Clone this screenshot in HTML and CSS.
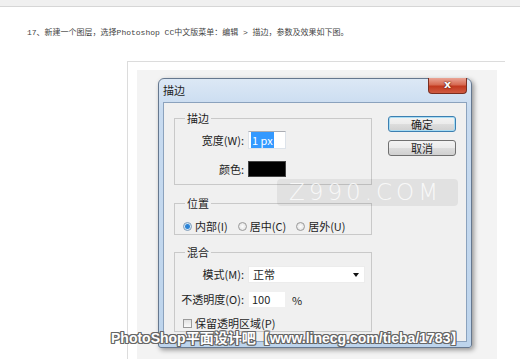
FILE: index.html
```html
<!DOCTYPE html>
<html lang="zh-CN">
<head>
    <meta charset="UTF-8">
    <meta name="viewport" content="width=device-width, initial-scale=1.0">
    <title>描边</title>
    <link rel="stylesheet" href="styles.css">
</head>
<body>
    <div class="topbar"></div>

    <p class="intro">17、新建一个图层，选择Photoshop CC中文版菜单：编辑 &gt; 描边，参数及效果如下图。</p>

    <div class="figure">
        <div class="shot">
            <div class="dialog">
                <div class="titlebar">
                    <span class="title">描边</span>
                    <span class="close">x</span>
                </div>
                <div class="client">
                    <div class="groups">
                        <div class="group group-stroke">
                            <div class="legend">描边</div>
                            <div class="row row-width">
                                <span class="lbl">宽度(W):</span>
                                <span class="field"><span class="sel">1 px</span></span>
                            </div>
                            <div class="row row-color">
                                <span class="lbl">颜色:</span>
                                <span class="swatch"></span>
                            </div>
                        </div>

                        <div class="group group-pos">
                            <div class="legend">位置</div>
                            <div class="radios">
                                <span class="opt"><span class="radio on"></span>内部(I)</span>
                                <span class="opt"><span class="radio"></span>居中(C)</span>
                                <span class="opt"><span class="radio"></span>居外(U)</span>
                            </div>
                        </div>

                        <div class="group group-blend">
                            <div class="legend">混合</div>
                            <div class="row row-mode">
                                <span class="lbl">模式(M):</span>
                                <span class="select">正常<span class="arrow"></span></span>
                            </div>
                            <div class="row row-opacity">
                                <span class="lbl">不透明度(O):</span>
                                <span class="field">100</span>
                                <span class="unit">%</span>
                            </div>
                            <div class="check-row">
                                <span class="checkbox"></span>保留透明区域(P)
                            </div>
                        </div>
                    </div>

                    <div class="buttons">
                        <span class="btn btn-default">确定</span>
                        <span class="btn">取消</span>
                    </div>
                </div>
            </div>

            <div class="mark">Z990.COM</div>
            <div class="credit">PhotoShop平面设计吧【www.linecg.com/tieba/1783】</div>
        </div>
    </div>
</body>
</html>
```

FILE: styles.css
```css
html, body {
    overflow: hidden;
}
body {
    margin: 0;
    padding: 0;
    background-color: #fff;
    font-family: "Noto Sans CJK SC", sans-serif;
    width: 520px;
    height: 359px;
}
.topbar {
    height: 6px;
    background-color: #f0f0f0;
    border-bottom: 1px solid #d6d6d6;
}
.intro {
    margin: 21px 0 0 0;
    padding-left: 27px;
    font-family: "Liberation Mono", "Noto Sans CJK SC", monospace;
    font-size: 8px;
    line-height: 10px;
    color: #444;
}
.figure {
    margin: 23px 0 0 127px;
    width: 378px;
    height: 298px;
    padding: 8px 8px 0 9px;
    box-sizing: border-box;
    border-top: 1px solid #dcdcdc;
    border-left: 1px solid #dcdcdc;
}
.shot {
    position: relative;
    width: 360px;
    height: 289px;
    padding: 8px 0 0 21px;
    box-sizing: border-box;
    background-color: #f3f3f3;
}

/* dialog window */
.dialog {
    width: 314px;
    height: 270px;
    box-sizing: border-box;
    border: 1px solid #66788f;
    border-radius: 6px 6px 3px 3px;
    padding: 0 4px 5px 4px;
    background: linear-gradient(#dce8f5, #c8dbf0 30px, #bdd4ec);
    box-shadow: 2px 2px 5px rgba(0,0,0,0.4);
}
.titlebar {
    height: 23px;
    display: flex;
    align-items: flex-start;
}
.title {
    font-size: 11px;
    line-height: 14px;
    padding-top: 4px;
    color: #222;
}
.close {
    margin: -1px 0 0 auto;
    width: 39px;
    height: 16px;
    box-sizing: border-box;
    border: 1px solid #7a2e20;
    border-top: none;
    border-radius: 0 0 4px 4px;
    background: linear-gradient(#eaa596, #d76a52 45%, #c2391f 55%, #cf5b42);
    color: #fff;
    font-family: "DejaVu Sans", sans-serif;
    font-weight: bold;
    font-size: 11px;
    line-height: 13px;
    text-align: center;
    text-shadow: 0 0 2px #5a1a10, 0 0 1px #5a1a10;
}
.client {
    height: 240px;
    box-sizing: border-box;
    border: 1px solid #8ba2bd;
    background-color: #f0f0f0;
    display: flex;
    font-size: 11px;
    color: #1e1e1e;
}
.groups {
    padding: 15px 0 0 10px;
}
.group {
    width: 198px;
    box-sizing: border-box;
    border: 1px solid #c9c9c9;
    padding-left: 8px;
}
.legend {
    width: fit-content;
    margin: -7px 0 0 2px;
    padding: 0 2px;
    line-height: 13px;
    background-color: #f0f0f0;
}
.row {
    display: flex;
    align-items: center;
    margin-left: -8px;
}
.lbl {
    width: 69px;
    margin-right: 4px;
    text-align: right;
    line-height: 13px;
}
.group-stroke {
    height: 67px;
}
.row-width {
    margin-top: 6px;
    height: 18px;
}
.row-color {
    margin-top: 12px;
    height: 16px;
}
.field {
    width: 38px;
    height: 18px;
    box-sizing: border-box;
    border: 1px solid #dde3ea;
    border-top-color: #abadb3;
    background-color: #fff;
    padding: 1px 2px;
    line-height: 14px;
}
.sel {
    background-color: #3399ff;
    color: #fff;
    padding: 0 1px;
}
.swatch {
    width: 38px;
    height: 16px;
    box-sizing: border-box;
    border: 1px solid #444;
    background-color: #000;
}
.group-pos {
    margin-top: 18px;
    height: 32px;
}
.radios {
    display: flex;
    margin-top: 10px;
    line-height: 13px;
}
.opt {
    display: flex;
    align-items: center;
    margin-right: 10px;
}
.radio {
    width: 9px;
    height: 9px;
    box-sizing: border-box;
    border: 1px solid #9a9a9a;
    border-radius: 50%;
    background: radial-gradient(#fdfdfd, #dcdcdc);
    margin-right: 3px;
}
.radio.on {
    background: radial-gradient(circle, #2b7fd3 0, #2f86d6 2px, #cfe6fa 3px, #f4f4f4 4px);
    border-color: #7a9ab9;
}
.group-blend {
    margin-top: 17px;
    height: 80px;
}
.row-mode {
    margin-top: 7px;
    height: 17px;
}
.select {
    position: relative;
    width: 117px;
    height: 17px;
    box-sizing: border-box;
    background-color: #fff;
    border: 1px solid #ececec;
    padding-left: 4px;
    line-height: 15px;
}
.arrow {
    position: absolute;
    right: 5px;
    top: 6px;
    border-left: 3px solid transparent;
    border-right: 3px solid transparent;
    border-top: 4px solid #111;
}
.row-opacity {
    margin-top: 8px;
    height: 17px;
}
.row-opacity .field {
    height: 17px;
    border-color: #f0f0f0;
    padding: 0 3px;
}
.unit {
    margin-left: 6px;
}
.check-row {
    display: flex;
    align-items: center;
    margin-top: 9px;
    line-height: 13px;
}
.checkbox {
    width: 9px;
    height: 9px;
    box-sizing: border-box;
    border: 1px solid #9a9a9a;
    background: linear-gradient(#e2e2e2, #fafafa);
    margin-right: 3px;
}

/* buttons */
.buttons {
    margin-left: 16px;
    padding-top: 13px;
    display: flex;
    flex-direction: column;
    gap: 8px;
}
.btn {
    width: 68px;
    height: 16px;
    box-sizing: border-box;
    border: 1px solid #707070;
    border-radius: 3px;
    background: linear-gradient(#f3f3f3, #ebebeb 50%, #dddddd 51%, #d0d0d0);
    text-align: center;
    line-height: 14px;
}
.btn-default {
    border-color: #3c7fb1;
    box-shadow: inset 0 0 0 1px #a8dcf3;
}

/* watermarks over the picture */
.mark {
    position: absolute;
    left: 140px;
    top: 109px;
    width: 181px;
    height: 27px;
    border-radius: 4px;
    background-color: rgba(0,0,0,0.06);
    color: rgba(255,255,255,0.8);
    font-family: "DejaVu Sans", sans-serif;
    font-weight: 200;
    font-size: 23px;
    line-height: 27px;
    letter-spacing: 4px;
    padding-left: 12px;
    box-sizing: border-box;
    white-space: nowrap;
}
.credit {
    position: absolute;
    left: -26px;
    top: 260px;
    white-space: nowrap;
    font-family: "Liberation Sans", "Noto Sans CJK SC", sans-serif;
    font-weight: bold;
    font-size: 14px;
    line-height: 16px;
    color: #fff;
    text-shadow: 1px 1px 0 #666, -1px -1px 0 #666, 1px -1px 0 #666, -1px 1px 0 #666, 0 1px 0 #666, 0 -1px 0 #666, 1px 0 0 #666, -1px 0 0 #666;
}
```
